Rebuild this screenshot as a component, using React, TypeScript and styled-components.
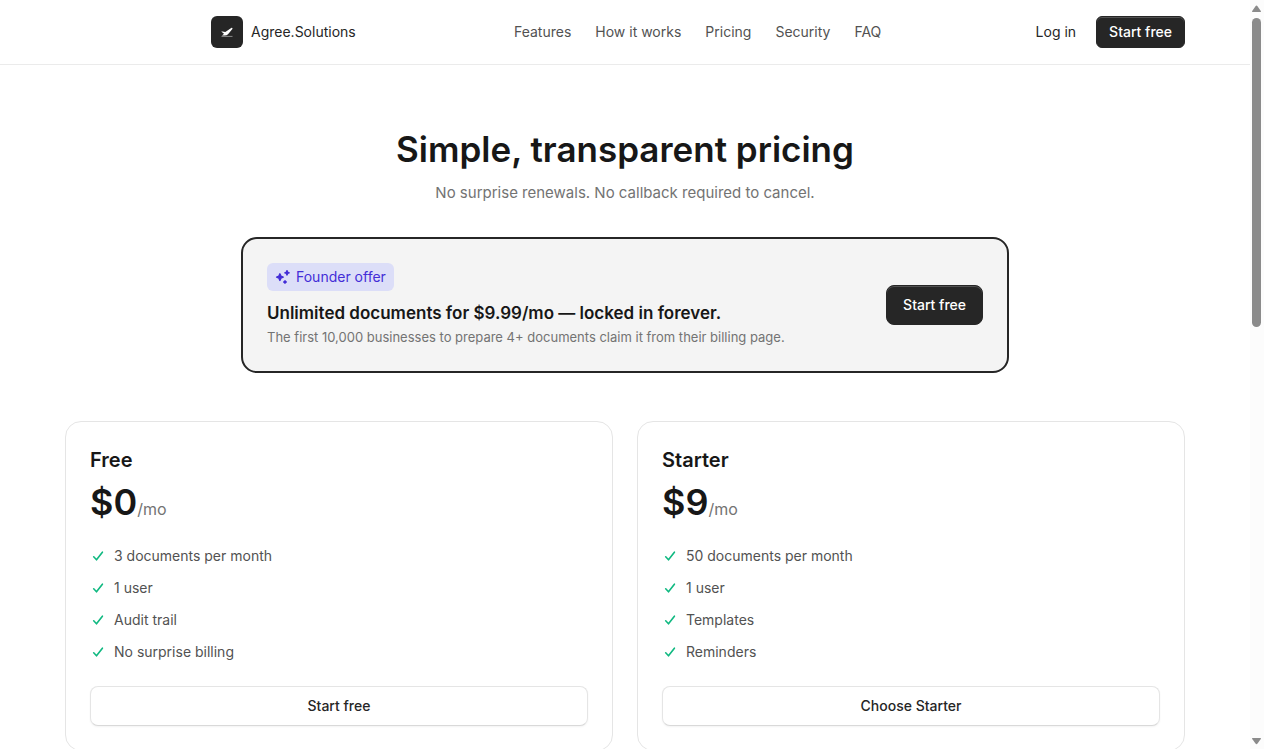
import React from "react";
import styled, { createGlobalStyle, css } from "styled-components";

const GlobalStyle = createGlobalStyle`
  *, *::before, *::after { box-sizing: border-box; }
  body {
    margin: 0;
    background: #fff;
    color: #171717;
    font-family: Inter, "Liberation Sans", sans-serif;
    font-size: 14px;
    line-height: 20px;
  }
  h1, h2, h3, p, ul { margin: 0; padding: 0; }
  a { color: inherit; text-decoration: none; }
`;

const Shell = styled.div`
  display: flex;
  height: 100vh;
  overflow: hidden;
`;

const Viewport = styled.div`
  flex: 1;
  min-width: 0;
  overflow: hidden;
`;

const Header = styled.header`
  border-bottom: 1px solid #ebebeb;
`;

const HeaderInner = styled.div`
  display: flex;
  align-items: center;
  justify-content: space-between;
  max-width: 1120px;
  height: 64px;
  margin: 0 auto;
  padding-left: 146px;
`;

const Brand = styled.a`
  display: flex;
  align-items: center;
  gap: 8px;
  color: #262626;
`;

const BrandMark = styled.span`
  display: grid;
  place-items: center;
  width: 32px;
  height: 32px;
  border-radius: 6px;
  background: #262626;
`;

const Nav = styled.nav`
  display: flex;
  gap: 24px;
  padding-left: 16px;
  color: #525252;
`;

const Actions = styled.div`
  display: flex;
  align-items: center;
  gap: 8px;
`;

const LoginLink = styled.a`
  padding: 6px 12px;
  color: #262626;
`;

const Button = styled.button<{ $variant?: "solid" | "outline"; $size?: "sm" | "md" }>`
  height: ${({ $size }) => ($size === "sm" ? 32 : 40)}px;
  padding: 0 ${({ $size }) => ($size === "sm" ? 12 : 16)}px;
  border-radius: ${({ $size }) => ($size === "sm" ? 6 : 8)}px;
  font: inherit;
  font-weight: 500;
  white-space: nowrap;
  cursor: pointer;
  ${({ $variant }) =>
    $variant === "outline"
      ? css`
          width: 100%;
          border: 1px solid #e5e5e5;
          border-bottom-color: #d9d9d9;
          background: #fff;
          color: #262626;
          box-shadow: 0 1px 2px rgba(0, 0, 0, 0.05);
        `
      : css`
          border: 1px solid #262626;
          background: #262626;
          color: #fff;
          box-shadow: inset 0 1px 0 rgba(255, 255, 255, 0.2);
        `}
`;

const Main = styled.main`
  max-width: 1120px;
  margin: 0 auto;
  padding: 64px 0;
`;

const Intro = styled.div`
  display: grid;
  gap: 12px;
  margin-bottom: 32px;
  text-align: center;
`;

const Title = styled.h1`
  font-size: 35px;
  font-weight: 600;
  line-height: 40px;
`;

const Subtitle = styled.p`
  color: #737373;
  font-size: 15px;
  line-height: 24px;
`;

const Offer = styled.section`
  display: flex;
  align-items: center;
  justify-content: space-between;
  gap: 24px;
  max-width: 768px;
  margin: 0 auto 48px;
  padding: 24px;
  border: 2px solid #262626;
  border-radius: 16px;
  background: #f4f4f4;
`;

const Badge = styled.span`
  display: inline-flex;
  align-items: center;
  gap: 5px;
  height: 28px;
  margin-bottom: 8px;
  padding: 0 8px;
  border-radius: 6px;
  background: #dcdef8;
  color: #432dd7;
`;

const OfferTitle = styled.h2`
  font-size: 17px;
  font-weight: 600;
  line-height: 28px;
`;

const OfferText = styled.p`
  color: #737373;
  font-size: 13px;
`;

const Plans = styled.div`
  display: grid;
  grid-template-columns: repeat(2, 1fr);
  gap: 24px;
`;

const Card = styled.article`
  padding: 24px;
  border: 1px solid #e5e5e5;
  border-radius: 16px;
  background: #fff;
`;

const PlanName = styled.h3`
  font-size: 20px;
  font-weight: 600;
  line-height: 28px;
`;

const Price = styled.p`
  margin-top: 8px;
  font-size: 36px;
  font-weight: 600;
  line-height: 40px;
`;

const Period = styled.span`
  color: #737373;
  font-size: 16px;
  font-weight: 400;
  line-height: 20px;
`;

const Features = styled.ul`
  display: grid;
  gap: 12px;
  margin: 24px 0;
  color: #525252;
  list-style: none;
`;

const Feature = styled.li`
  display: flex;
  align-items: center;
  gap: 8px;
`;

const Scrollbar = styled.div`
  display: flex;
  flex-direction: column;
  align-items: center;
  width: 14px;
  padding-right: 1px;
  background: #fcfcfc;
`;

const Track = styled.div`
  flex: 1;
  width: 9px;
`;

const Thumb = styled.div`
  height: 43.4%;
  border-radius: 5px;
  background: #8b8b8b;
`;

const ArrowIcon = ({ down = false }: { down?: boolean }) => (
  <svg width="13" height="18" viewBox="0 0 13 18" aria-hidden="true">
    <path
      d={
        down
          ? "M2.700 7h7.600q1.200 0 .5 1L7.500 12.600q-1 1.200-2 0L2.200 8q-.7-1 .5-1z"
          : "M2.700 12h7.600q1.200 0 .5-1L7.500 6.200q-1-1.200-2 0L2.200 11q-.7 1 .5 1z"
      }
      fill="#8b8b8b"
    />
  </svg>
);

const LogoIcon = () => (
  <svg width="16" height="16" viewBox="0 0 16 16" aria-hidden="true">
    <path
      d="M2.200 7.600 3.400 7.400 6.300 8 12.600 3.800Q13.800 3.700 13.400 4.900L9 10.200Q7.800 11.500 5.800 11.600L3 11.400 5 9.700Z"
      fill="#fff"
    />
    <path d="M2.500 12.400h11" stroke="#a3a3a3" strokeWidth=".8" />
  </svg>
);

const SparkIcon = () => (
  <svg
    width="16"
    height="16"
    viewBox="0 0 16 16"
    aria-hidden="true"
    fill="currentColor"
    stroke="currentColor"
    strokeWidth="1.400"
    strokeLinejoin="round"
  >
    <path d="m4.900 4.800 1 2.300 2.300 1-2.300 1-1 2.300-1-2.300-2.300-1 2.300-1z" />
    <path d="m12 1.600.6 1.600 1.600.6-1.600.6L12 6l-.6-1.600-1.600-.6 1.600-.6z" />
    <path d="m10 11.700.4.900.9.400-.9.400-.4.900-.4-.9-.9-.4.900-.4z" />
  </svg>
);

const CheckIcon = () => (
  <svg width="16" height="16" viewBox="0 0 16 16" aria-hidden="true">
    <path
      d="M3.700 8.800 6.500 11.800 12.400 4.200"
      fill="none"
      stroke="#10b981"
      strokeWidth="1.600"
      strokeLinecap="round"
      strokeLinejoin="round"
    />
  </svg>
);

const links = ["Features", "How it works", "Pricing", "Security", "FAQ"];

const plans = [
  {
    name: "Free",
    price: "$0",
    features: ["3 documents per month", "1 user", "Audit trail", "No surprise billing"],
    action: "Start free",
  },
  {
    name: "Starter",
    price: "$9",
    features: ["50 documents per month", "1 user", "Templates", "Reminders"],
    action: "Choose Starter",
  },
];

export default function App() {
  return (
    <Shell>
      <GlobalStyle />
      <Viewport>
        <Header>
          <HeaderInner>
            <Brand href="#">
              <BrandMark>
                <LogoIcon />
              </BrandMark>
              Agree.Solutions
            </Brand>
            <Nav>
              {links.map((label) => (
                <a key={label} href="#">
                  {label}
                </a>
              ))}
            </Nav>
            <Actions>
              <LoginLink href="#">Log in</LoginLink>
              <Button $size="sm">Start free</Button>
            </Actions>
          </HeaderInner>
        </Header>
        <Main>
          <Intro>
            <Title>Simple, transparent pricing</Title>
            <Subtitle>No surprise renewals. No callback required to cancel.</Subtitle>
          </Intro>
          <Offer>
            <div>
              <Badge>
                <SparkIcon />
                Founder offer
              </Badge>
              <OfferTitle>Unlimited documents for $9.99/mo — locked in forever.</OfferTitle>
              <OfferText>The first 10,000 businesses to prepare 4+ documents claim it from their billing page.</OfferText>
            </div>
            <Button>Start free</Button>
          </Offer>
          <Plans>
            {plans.map((plan) => (
              <Card key={plan.name}>
                <PlanName>{plan.name}</PlanName>
                <Price>
                  {plan.price}
                  <Period>/mo</Period>
                </Price>
                <Features>
                  {plan.features.map((feature) => (
                    <Feature key={feature}>
                      <CheckIcon />
                      {feature}
                    </Feature>
                  ))}
                </Features>
                <Button $variant="outline">{plan.action}</Button>
              </Card>
            ))}
          </Plans>
        </Main>
      </Viewport>
      <Scrollbar aria-hidden="true">
        <ArrowIcon />
        <Track>
          <Thumb />
        </Track>
        <ArrowIcon down />
      </Scrollbar>
    </Shell>
  );
}
